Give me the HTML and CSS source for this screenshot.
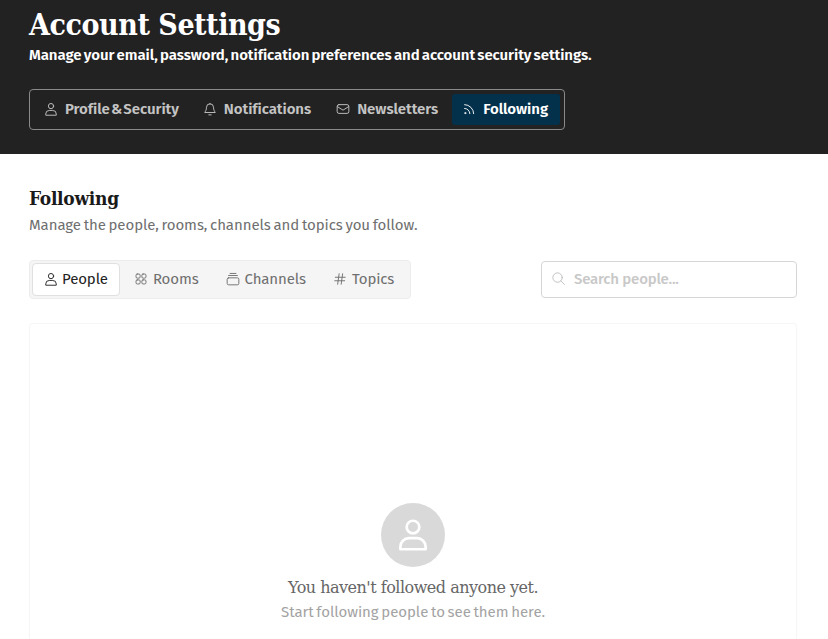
FILE: index.html
```html
<!DOCTYPE html>
<html lang="en">
<head>
    <meta charset="UTF-8">
    <meta name="viewport" content="width=device-width, initial-scale=1.0">
    <title>Account Settings</title>
    <link rel="stylesheet" href="styles.css">
</head>
<body>
    <!-- Page header -->
    <header class="page-header">
        <h1>Account Settings</h1>
        <p class="page-subtitle">Manage your email, password, notification preferences and account security settings.</p>
        <nav class="main-tabs">
            <a class="main-tab">
                <svg class="icon" viewBox="0 0 24 24"><circle cx="12" cy="7" r="4.5"/><path d="M3 22v-1.500a6 6 0 0 1 6-6h6a6 6 0 0 1 6 6V22z"/></svg>
                Profile &amp; Security
            </a>
            <a class="main-tab notifications-tab">
                <svg class="icon" viewBox="0 0 24 24"><path d="M12 3a6 6 0 0 0-6 6c0 5-2 7-3 9h18c-1-2-3-4-3-9a6 6 0 0 0-6-6z"/><path d="M10 22h4"/></svg>
                Notifications
            </a>
            <a class="main-tab">
                <svg class="icon" viewBox="0 0 24 24"><rect x="2" y="4.500" width="20" height="15" rx="3"/><path d="M2.500 8l9.500 6 9.500-6"/></svg>
                Newsletters
            </a>
            <a class="main-tab active">
                <svg class="icon" viewBox="0 0 24 24"><path d="M4.500 4.500a15.500 15.500 0 0 1 15.500 15.500"/><path d="M4.500 11a9 9 0 0 1 9 9"/><circle cx="5.500" cy="19" r="1"/></svg>
                Following
            </a>
        </nav>
    </header>

    <main class="content">
        <h2>Following</h2>
        <p class="content-subtitle">Manage the people, rooms, channels and topics you follow.</p>

        <div class="toolbar">
            <div class="sub-tabs">
                <a class="sub-tab active">
                    <svg class="icon" viewBox="0 0 24 24"><circle cx="12" cy="7" r="4.500"/><path d="M3 22v-1.500a6 6 0 0 1 6-6h6a6 6 0 0 1 6 6V22z"/></svg>
                    People
                </a>
                <a class="sub-tab">
                    <svg class="icon" viewBox="0 0 24 24"><rect x="3.500" y="3.500" width="7" height="7" rx="2"/><rect x="13.500" y="3.500" width="7" height="7" rx="2"/><rect x="3.500" y="13.500" width="7" height="7" rx="2"/><rect x="13.500" y="13.500" width="7" height="7" rx="2"/></svg>
                    Rooms
                </a>
                <a class="sub-tab">
                    <svg class="icon" viewBox="0 0 24 24"><rect x="2" y="10" width="20" height="12" rx="2.500"/><path d="M4.500 6h15"/><path d="M7 2.500h10"/></svg>
                    Channels
                </a>
                <a class="sub-tab">
                    <svg class="icon" viewBox="0 0 24 24"><path d="M4 9h17"/><path d="M3 15h17"/><path d="M10.500 3L8 21"/><path d="M16.500 3L14 21"/></svg>
                    Topics
                </a>
            </div>
            <label class="search-box">
                <svg class="icon" viewBox="0 0 24 24"><circle cx="10.500" cy="10.500" r="7.500"/><path d="M16 16l5.500 5.500"/></svg>
                <input type="text" placeholder="Search people...">
            </label>
        </div>

        <section class="empty-card">
            <div class="empty-avatar">
                <svg viewBox="0 0 24 24"><circle cx="12" cy="7" r="4"/><path d="M4 21v-1.500a5.500 5.500 0 0 1 5.500-5.500h5a5.500 5.500 0 0 1 5.500 5.500V21z"/></svg>
            </div>
            <p class="empty-title">You haven't followed anyone yet.</p>
            <p class="empty-text">Start following people to see them here.</p>
        </section>
    </main>
</body>
</html>
```

FILE: styles.css
```css
/* General Styles */
html, body {
    height: 639px;
    overflow: hidden;
}

body {
    margin: 0;
    background-color: #ffffff;
    font-family: "Fira Sans", "Noto Sans", sans-serif;
}

.icon {
    width: 14px;
    height: 14px;
    flex-shrink: 0;
    fill: none;
    stroke: currentColor;
    stroke-width: 1.6;
    stroke-linecap: round;
    stroke-linejoin: round;
}

/* Header */
.page-header {
    background-color: #222222;
    height: 154px;
    box-sizing: border-box;
    padding: 7px 29px 0;
}

h1 {
    margin: 0;
    font-family: "DejaVu Serif Condensed", "DejaVu Serif", serif;
    font-size: 30px;
    line-height: 36px;
    font-weight: 700;
    letter-spacing: -0.45px;
    color: #ffffff;
}

.page-subtitle {
    margin: 2px 0 0;
    font-size: 15px;
    line-height: 20px;
    font-weight: 600;
    letter-spacing: -0.06px;
    word-spacing: -1.4px;
    color: #ffffff;
}

.main-tabs {
    display: inline-flex;
    gap: 3px;
    margin-top: 24px;
    padding: 4px;
    height: 41px;
    box-sizing: border-box;
    border: 1px solid #8a8a8a;
    border-radius: 4px;
}

.main-tab {
    display: flex;
    align-items: center;
    gap: 7px;
    padding: 0 11px 2px 10px;
    border-radius: 3px;
    font-size: 15px;
    font-weight: 600;
    letter-spacing: -0.05px;
    word-spacing: -2.4px;
    color: #c4c4c4;
}

.notifications-tab {
    padding-right: 12px;
}

.main-tab.active {
    padding-right: 12px;
    background-color: #03314b;
    color: #ffffff;
}

/* Content */
.content {
    padding: 32px 31px 0 29px;
}

h2 {
    margin: 0;
    font-family: "DejaVu Serif Condensed", "DejaVu Serif", serif;
    font-size: 19px;
    line-height: 24px;
    font-weight: 700;
    letter-spacing: -0.3px;
    color: #1a1a1a;
}

.content-subtitle {
    margin: 5px 0 0;
    font-size: 15px;
    line-height: 20px;
    letter-spacing: -0.07px;
    word-spacing: -1.2px;
    color: #6f6f6f;
}

.toolbar {
    display: flex;
    justify-content: space-between;
    align-items: center;
    margin-top: 25px;
}

.sub-tabs {
    display: flex;
    gap: 2px;
    padding: 2px 3px 2px 2px;
    background-color: #f5f5f5;
    border: 1px solid #ececec;
    border-radius: 4px;
}

.sub-tab {
    display: flex;
    align-items: center;
    gap: 5px;
    height: 33px;
    box-sizing: border-box;
    padding: 0 12px 2px 11px;
    border: 1px solid transparent;
    border-radius: 4px;
    font-size: 15px;
    letter-spacing: -0.12px;
    color: #6f6f6f;
}

.sub-tab.active {
    gap: 4px;
    padding-right: 11px;
    background-color: #ffffff;
    border-color: #e0e0e0;
    color: #222222;
}

.search-box {
    display: flex;
    align-items: center;
    gap: 8px;
    width: 256px;
    height: 37px;
    box-sizing: border-box;
    padding: 0 9px 2px;
    border: 1px solid #d6d6d6;
    border-radius: 4px;
    color: #b5b5b5;
}

.search-box .icon {
    width: 15px;
    height: 15px;
    stroke-width: 1.3;
}

.search-box input {
    flex: 1;
    min-width: 0;
    border: none;
    outline: none;
    padding: 0;
    font-family: inherit;
    font-size: 15px;
    font-weight: 500;
    letter-spacing: -0.2px;
}

.search-box input::placeholder {
    color: #c8c8c8;
    opacity: 1;
}

/* Empty state */
.empty-card {
    display: flex;
    flex-direction: column;
    align-items: center;
    height: 316px;
    margin-top: 24px;
    box-sizing: border-box;
    padding-top: 179px;
    border: 1px solid #f6f6f6;
    border-bottom: none;
    border-radius: 4px 4px 0 0;
    background-color: #ffffff;
    box-shadow: 0 1px 3px rgba(0, 0, 0, 0.02);
}

.empty-avatar {
    display: flex;
    justify-content: center;
    align-items: center;
    flex-shrink: 0;
    width: 64px;
    height: 64px;
    border-radius: 50%;
    background-color: #d9d9d9;
}

.empty-avatar svg {
    width: 38px;
    height: 38px;
    fill: none;
    stroke: #ffffff;
    stroke-width: 1.7;
    stroke-linejoin: round;
}

.empty-title {
    margin: 8px 0 0;
    font-family: "DejaVu Serif", serif;
    font-size: 16px;
    line-height: 26px;
    letter-spacing: -0.5px;
    color: #666666;
}

.empty-text {
    margin: 1px 0 0;
    font-size: 15px;
    line-height: 20px;
    color: #a3a3a3;
    letter-spacing: -0.05px;
    word-spacing: -1.2px;
}
```
